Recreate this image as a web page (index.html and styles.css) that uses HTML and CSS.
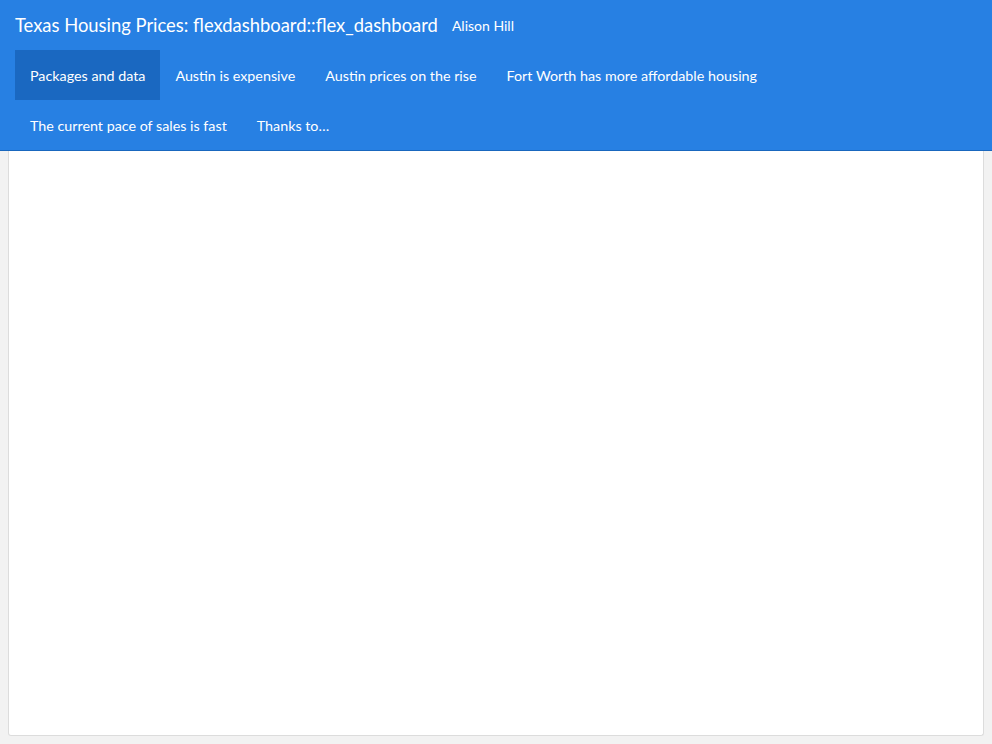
FILE: index.html
```html
<!DOCTYPE html>
<html>
<head>
<meta charset="utf-8">
<link rel="stylesheet" href="styles.css">
</head>
<body>
<header class="navbar">
  <div class="brand-row">
    <span class="title">Texas Housing Prices: flexdashboard::flex_dashboard</span>
    <span class="author">Alison Hill</span>
  </div>
  <nav class="tabs">
    <a class="tab active">Packages and data</a>
    <a class="tab">Austin is expensive</a>
    <a class="tab">Austin prices on the rise</a>
    <a class="tab">Fort Worth has more affordable housing</a>
    <a class="tab">The current pace of sales is fast</a>
    <a class="tab">Thanks to…</a>
  </nav>
</header>
<main class="content">
  <section class="panel"></section>
</main>
</body>
</html>
```
FILE: styles.css
```css
html, body {
  margin: 0;
  padding: 0;
  height: 100%;
}
body {
  background: #f2f2f2;
  font-family: Lato, "Open Sans", sans-serif;
  display: flex;
  flex-direction: column;
}
.navbar {
  background: #2780e3;
  border-bottom: 1px solid #1967be;
  color: #fff;
  padding: 0 15px;
}
.brand-row {
  height: 50px;
  display: flex;
  align-items: center;
  gap: 14px;
}
.title {
  font-size: 18.4px;
}
.author {
  font-size: 14px;
}
.tabs {
  display: flex;
  flex-wrap: wrap;
  max-width: 780px;
}
.tab {
  height: 50px;
  display: flex;
  align-items: center;
  padding: 0 15px;
  font-size: 14.3px;
  color: #fff;
}
.tab.active {
  background: #1a68c1;
}
.content {
  flex: 1;
  padding: 0 8px 8px 8px;
  display: flex;
}
.panel {
  flex: 1;
  background: #fff;
  border: 1px solid #dcdcdc;
  border-top: none;
  border-radius: 0 0 3px 3px;
}
```
